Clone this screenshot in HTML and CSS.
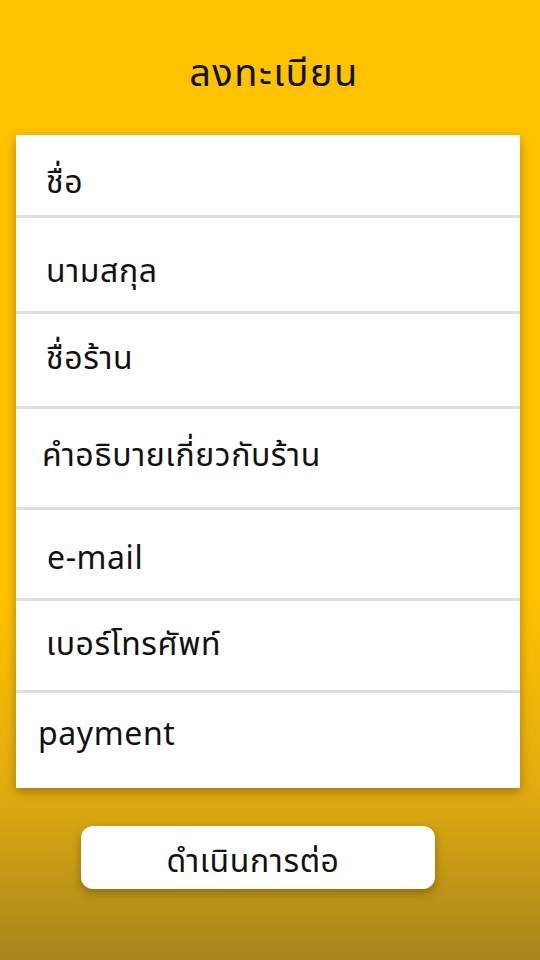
FILE: index.html
```html
<!DOCTYPE html>
<html lang="th">
<head>
<meta charset="utf-8">
<title>ลงทะเบียน</title>
<link rel="stylesheet" href="styles.css">
</head>
<body>
<div class="screen">
  <h1 class="title">ลงทะเบียน</h1>
  <div class="card">
    <div class="row r1">ชื่อ</div>
    <div class="row r2">นามสกุล</div>
    <div class="row r3">ชื่อร้าน</div>
    <div class="row r4 tight">คำอธิบายเกี่ยวกับร้าน</div>
    <div class="row r5 email">e-mail</div>
    <div class="row r6">เบอร์โทรศัพท์</div>
    <div class="row r7 pay">payment</div>
  </div>
  <div class="actions">
    <button class="btn">ดำเนินการต่อ</button>
  </div>
</div>
</body>
</html>
```
FILE: styles.css
```css
html, body {
  margin: 0;
  padding: 0;
}
body {
  width: 540px;
  height: 960px;
  overflow: hidden;
  font-family: "Noto Sans Thai", "Noto Sans", "Open Sans", sans-serif;
  color: #111;
  background: linear-gradient(to bottom, #ffc200 0%, #ffc200 62%, #e2ac10 82%, #a6851c 100%);
}
.screen {
  display: flex;
  flex-direction: column;
  align-items: flex-start;
  height: 960px;
}
.title {
  margin: 0;
  width: 540px;
  height: 135px;
  display: flex;
  align-items: center;
  justify-content: center;
  font-size: 38px;
  letter-spacing: 1.5px;
  font-weight: 400;
  padding-top: 14px;
  padding-left: 8px;
  box-sizing: border-box;
}
.card {
  margin-left: 16px;
  width: 504px;
  background: #fff;
  box-shadow: 0 4px 10px rgba(90, 60, 0, 0.45);
  display: flex;
  flex-direction: column;
}
.row {
  display: flex;
  align-items: center;
  padding-left: 30px;
  font-size: 32px;
  letter-spacing: 0.6px;
  border-bottom: 3px solid #e0e0e0;
  box-sizing: border-box;
}
.row.tight { padding-left: 26px; }
.row.email { padding-left: 31px; }
.row.pay { padding-left: 22px; border-bottom: none; align-items: flex-start; padding-top: 18px; }
.r1 { height: 83px; padding-top: 16px; }
.r2 { height: 96px; padding-top: 14px; }
.r3 { height: 95px; padding-bottom: 2px; }
.r4 { height: 101px; padding-bottom: 4px; }
.r5 { height: 91px; padding-top: 10px; }
.r6 { height: 92px; padding-bottom: 2px; }
.r7 { height: 95px; }
.actions {
  margin-top: 38px;
  margin-left: 81px;
}
.btn {
  width: 354px;
  height: 63px;
  border: none;
  border-radius: 12px;
  background: #fff;
  font-family: inherit;
  font-size: 32px;
  letter-spacing: 0.6px;
  color: #111;
  box-shadow: 0 4px 10px rgba(80, 55, 0, 0.45);
  padding: 8px 10px 0 0;
}
```
